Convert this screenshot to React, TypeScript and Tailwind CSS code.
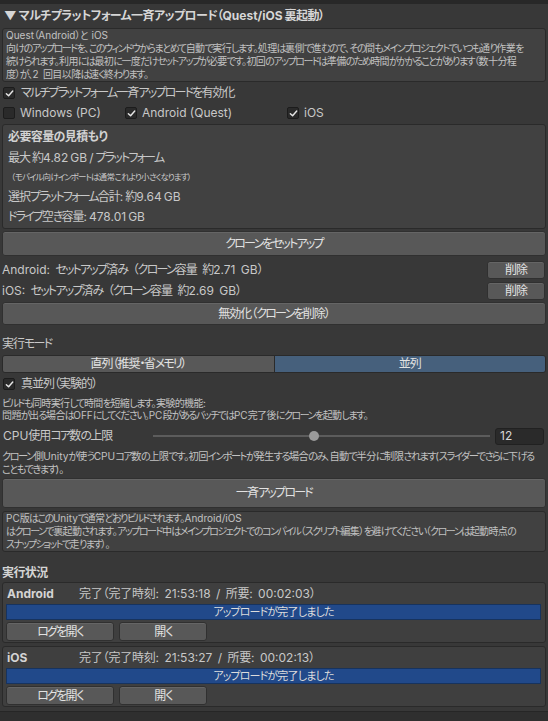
import clsx from 'clsx';
import { ReactNode } from 'react';

type Variant = 'main' | 'small' | 'tiny' | 'bold' | 'bar' | 'status';

// the reference font draws kana far narrower than Noto, so squeeze CJK runs only
const KANA: Record<Variant, string> = {
    main: 'tracking-[-1.8px]',
    small: 'tracking-[-1.5px]',
    tiny: 'tracking-[-1px]',
    bold: 'tracking-[-0.6px]',
    bar: 'tracking-[-0.9px]',
    status: 'tracking-[-0.5px]',
};
const KANJI: Record<Variant, string> = {
    main: 'tracking-[-1px]',
    small: 'tracking-[-0.6px]',
    tiny: 'tracking-[-0.4px]',
    bold: 'tracking-[-0.6px]',
    bar: 'tracking-[-0.6px]',
    status: 'tracking-[-0.2px]',
};
const SPACE: Record<Variant, string> = {
    main: 'pr-[2px]',
    small: 'pr-[1.5px]',
    tiny: 'pr-[1px]',
    bold: 'pr-[2px]',
    bar: 'pr-[1px]',
    status: 'pr-[2px]',
};

function kind(ch: string) {
    if (ch === ' ') return 's';
    if (/[\u3040-\u30ff]/.test(ch)) return 'k';
    if (/[\u3000-\u303f\u3400-\u9fff\uff00-\uffef]/.test(ch)) return 'h';
    return 'l';
}

function JP({ text, v = 'main' }: { text: string; v?: Variant }) {
    const runs: { k: string; s: string }[] = [];
    for (const ch of text) {
        const k = kind(ch);
        const last = runs[runs.length - 1];
        if (last && last.k === k) last.s += ch;
        else runs.push({ k, s: ch });
    }
    return (
        <>
            {runs.map((r, i) => (
                <span
                    key={i}
                    className={r.k === 'k' ? KANA[v] : r.k === 'h' ? KANJI[v] : r.k === 's' ? SPACE[v] : undefined}
                >
                    {r.s}
                </span>
            ))}
        </>
    );
}

function Check({ checked }: { checked: boolean }) {
    return (
        <span className="flex h-[12px] w-[12px] shrink-0 items-center justify-center rounded-[2px] border border-[#1c1c1c] bg-[#2a2a2a]">
            {checked && (
                <svg width="9" height="9" viewBox="0 0 10 10" fill="none">
                    <path d="M1.5 5.2 L4 7.6 L8.6 2.2" stroke="#e6e6e6" strokeWidth="1.6" strokeLinecap="round" strokeLinejoin="round" />
                </svg>
            )}
        </span>
    );
}

function Btn({ children, className }: { children: ReactNode; className?: string }) {
    return (
        <div
            className={clsx(
                'flex items-center justify-center whitespace-nowrap rounded-[3px] border border-[#303030] bg-[#585858] text-[12px] text-[#e2e2e2] shadow-[inset_0_1px_0_#656565]',
                className
            )}
        >
            {children}
        </div>
    );
}

function HelpBox({ lines, className }: { lines: string[]; className?: string }) {
    return (
        <div
            className={clsx(
                'mx-[2px] rounded-[3px] border border-[#2a2a2a] bg-[#414141] px-[3px] text-[10px] leading-[13px] text-[#c2c2c2]',
                className
            )}
        >
            {lines.map((line) => (
                <div key={line} className="whitespace-nowrap">
                    <JP text={line} v="small" />
                </div>
            ))}
        </div>
    );
}

function PlatformStatus({ name, status, className }: { name: string; status: string; className?: string }) {
    return (
        <div className={clsx('mx-[2px] h-[61px] rounded-[3px] border border-[#2a2a2a] bg-[#3f3f3f] pl-[3px] pr-[4px] pt-[2px]', className)}>
            <div className="flex h-[18px] items-center whitespace-nowrap">
                <span className="w-[73px] pl-[1px] font-bold text-[#d4d4d4]">{name}</span>
                <span>
                    <JP text={status} v="status" />
                </span>
            </div>
            <div className="mt-[1px] flex h-[16px] items-center justify-center border border-[#17335e] bg-[#21498a] text-[11px] text-[#dcdcdc]">
                <JP text="アップロードが完了しました" v="bar" />
            </div>
            <div className="mt-[2px] flex gap-[5px]">
                <Btn className="h-[19px] w-[108px]">
                    <JP text="ログを開く" />
                </Btn>
                <Btn className="h-[19px] w-[88px]">
                    <JP text="開く" />
                </Btn>
            </div>
        </div>
    );
}

export default function App() {
    return (
        <div className="flex h-[721px] w-[548px] flex-col overflow-hidden bg-[#383838] font-[Inter,'Noto_Sans_CJK_JP',sans-serif] text-[12px] text-[#c8c8c8] [font-feature-settings:'palt']">
            <div className="h-[4px] bg-[#282828]" />

            <div className="flex h-[24px] items-center whitespace-nowrap pl-[4px] font-bold text-[#d6d6d6]">
                <JP text="▼ マルチプラットフォーム一斉アップロード（Quest/iOS 裏起動）" v="bold" />
            </div>

            <HelpBox
                className="h-[54px]"
                lines={[
                    'Quest（Android）と iOS',
                    '向けのアップロードを、このウィンドウからまとめて自動で実行します。処理は裏側で進むので、その間もメインプロジェクトでいつも通り作業を',
                    '続けられます。利用には最初に一度だけセットアップが必要です。初回のアップロードは準備のため時間がかかることがあります（数十分程',
                    '度）が、2 回目以降は速く終わります。',
                ]}
            />

            <div className="mt-[1px] flex h-[20px] items-center gap-[6px] pl-[3px]">
                <Check checked />
                <span>
                    <JP text="マルチプラットフォーム一斉アップロードを有効化" />
                </span>
            </div>

            <div className="flex h-[20px] items-center pl-[3px]">
                <div className="flex w-[122px] items-center gap-[5px]">
                    <Check checked={false} />
                    <span>Windows (PC)</span>
                </div>
                <div className="flex w-[162px] items-center gap-[5px]">
                    <Check checked />
                    <span>Android (Quest)</span>
                </div>
                <div className="flex items-center gap-[5px]">
                    <Check checked />
                    <span>iOS</span>
                </div>
            </div>

            <div className="mx-[2px] mt-[1px] h-[105px] rounded-[3px] border border-[#2a2a2a] bg-[#414141] px-[5px] pt-[2px]">
                <div className="flex h-[20px] items-center font-bold text-[#d2d2d2]">
                    <JP text="必要容量の見積もり" v="bold" />
                </div>
                <div className="flex h-[21px] items-center">
                    <JP text="最大 約4.82 GB / プラットフォーム" />
                </div>
                <div className="flex h-[19px] items-center pl-[3px] text-[8.5px]">
                    <JP text="（モバイル向けインポートは通常これより小さくなります）" v="tiny" />
                </div>
                <div className="flex h-[20px] items-center">
                    <JP text="選択プラットフォーム合計: 約9.64 GB" />
                </div>
                <div className="flex h-[19px] items-center">
                    <JP text="ドライブ空き容量: 478.01 GB" />
                </div>
            </div>

            <Btn className="mx-[2px] mt-[2px] h-[25px]">
                <JP text="クローンをセットアップ" />
            </Btn>

            <div className="mt-[4px] flex h-[20px] items-center justify-between pl-[2px] pr-[3px]">
                <span>
                    <JP text="Android: セットアップ済み （クローン容量 約2.71 GB）" />
                </span>
                <Btn className="h-[18px] w-[58px]">
                    <JP text="削除" />
                </Btn>
            </div>
            <div className="mt-[1px] flex h-[20px] items-center justify-between pl-[2px] pr-[3px]">
                <span>
                    <JP text="iOS: セットアップ済み （クローン容量 約2.69 GB）" />
                </span>
                <Btn className="h-[18px] w-[58px]">
                    <JP text="削除" />
                </Btn>
            </div>

            <Btn className="mx-[2px] mt-[1px] h-[23px]">
                <JP text="無効化（クローンを削除）" />
            </Btn>

            <div className="mt-[10px] flex h-[18px] items-center pl-[2px]">
                <JP text="実行モード" />
            </div>

            <div className="mx-[2px] mt-[2px] flex h-[18px] overflow-hidden rounded-[3px] border border-[#2a2a2a] text-[#e2e2e2]">
                <div className="flex flex-1 items-center justify-center border-r border-[#2a2a2a] bg-[#585858]">
                    <JP text="直列（推奨・省メモリ）" />
                </div>
                <div className="flex flex-1 items-center justify-center bg-[#46607c]">
                    <JP text="並列" />
                </div>
            </div>

            <div className="mt-[2px] flex h-[18px] items-center gap-[6px] pl-[3px]">
                <Check checked />
                <span>
                    <JP text="真並列（実験的）" />
                </span>
            </div>

            <div className="mt-[4px] pl-[2px] text-[10px] leading-[12px] text-[#c2c2c2]">
                <div className="whitespace-nowrap">
                    <JP text="ビルドも同時実行して時間を短縮します。実験的機能:" v="small" />
                </div>
                <div className="whitespace-nowrap">
                    <JP text="問題が出る場合はOFFにしてください。PC段があるバッチではPC完了後にクローンを起動します。" v="small" />
                </div>
            </div>

            <div className="mt-[5px] flex h-[20px] items-center pl-[3px] pr-[4px]">
                <span className="w-[150px]">
                    <JP text="CPU使用コア数の上限" />
                </span>
                <div className="relative flex h-full flex-1 items-center">
                    <div className="h-[2px] w-full bg-[#5c5c5c]" />
                    <div className="absolute left-[156px] h-[10px] w-[10px] rounded-full bg-[#9a9a9a]" />
                </div>
                <div className="ml-[5px] flex h-[17px] w-[49px] items-center rounded-[3px] border border-[#212121] bg-[#2a2a2a] pl-[4px] text-[#d8d8d8]">
                    12
                </div>
            </div>

            <div className="mt-[4px] pl-[2px] text-[10.2px] leading-[13px] text-[#c2c2c2]">
                <div className="whitespace-nowrap">
                    <JP
                        text="クローン側Unityが使うCPUコア数の上限です。初回インポートが発生する場合のみ、自動で半分に制限されます(スライダーでさらに下げる"
                        v="small"
                    />
                </div>
                <div className="whitespace-nowrap">
                    <JP text="こともできます)。" v="small" />
                </div>
            </div>

            <Btn className="mx-[2px] mt-[2px] h-[30px]">
                <JP text="一斉アップロード" />
            </Btn>

            <HelpBox
                className="mt-[3px] h-[41px]"
                lines={[
                    'PC版はこのUnityで通常どおりビルドされます。Android/iOS',
                    'はクローンで裏起動されます。アップロード中はメインプロジェクトでのコンパイル（スクリプト編集）を避けてください（クローンは起動時点の',
                    'スナップショットで走ります）。',
                ]}
            />

            <div className="mt-[12px] flex h-[18px] items-center pl-[2px] font-bold text-[#d4d4d4]">
                <JP text="実行状況" v="bold" />
            </div>

            <PlatformStatus name="Android" status="完了（完了時刻: 21:53:18 / 所要: 00:02:03）" />
            <PlatformStatus className="mt-[3px]" name="iOS" status="完了（完了時刻: 21:53:27 / 所要: 00:02:13）" />

            <div className="mt-[4px] h-[1px] bg-[#262626]" />
            <div className="flex-1 bg-[#2f2f2f]" />
        </div>
    );
}
